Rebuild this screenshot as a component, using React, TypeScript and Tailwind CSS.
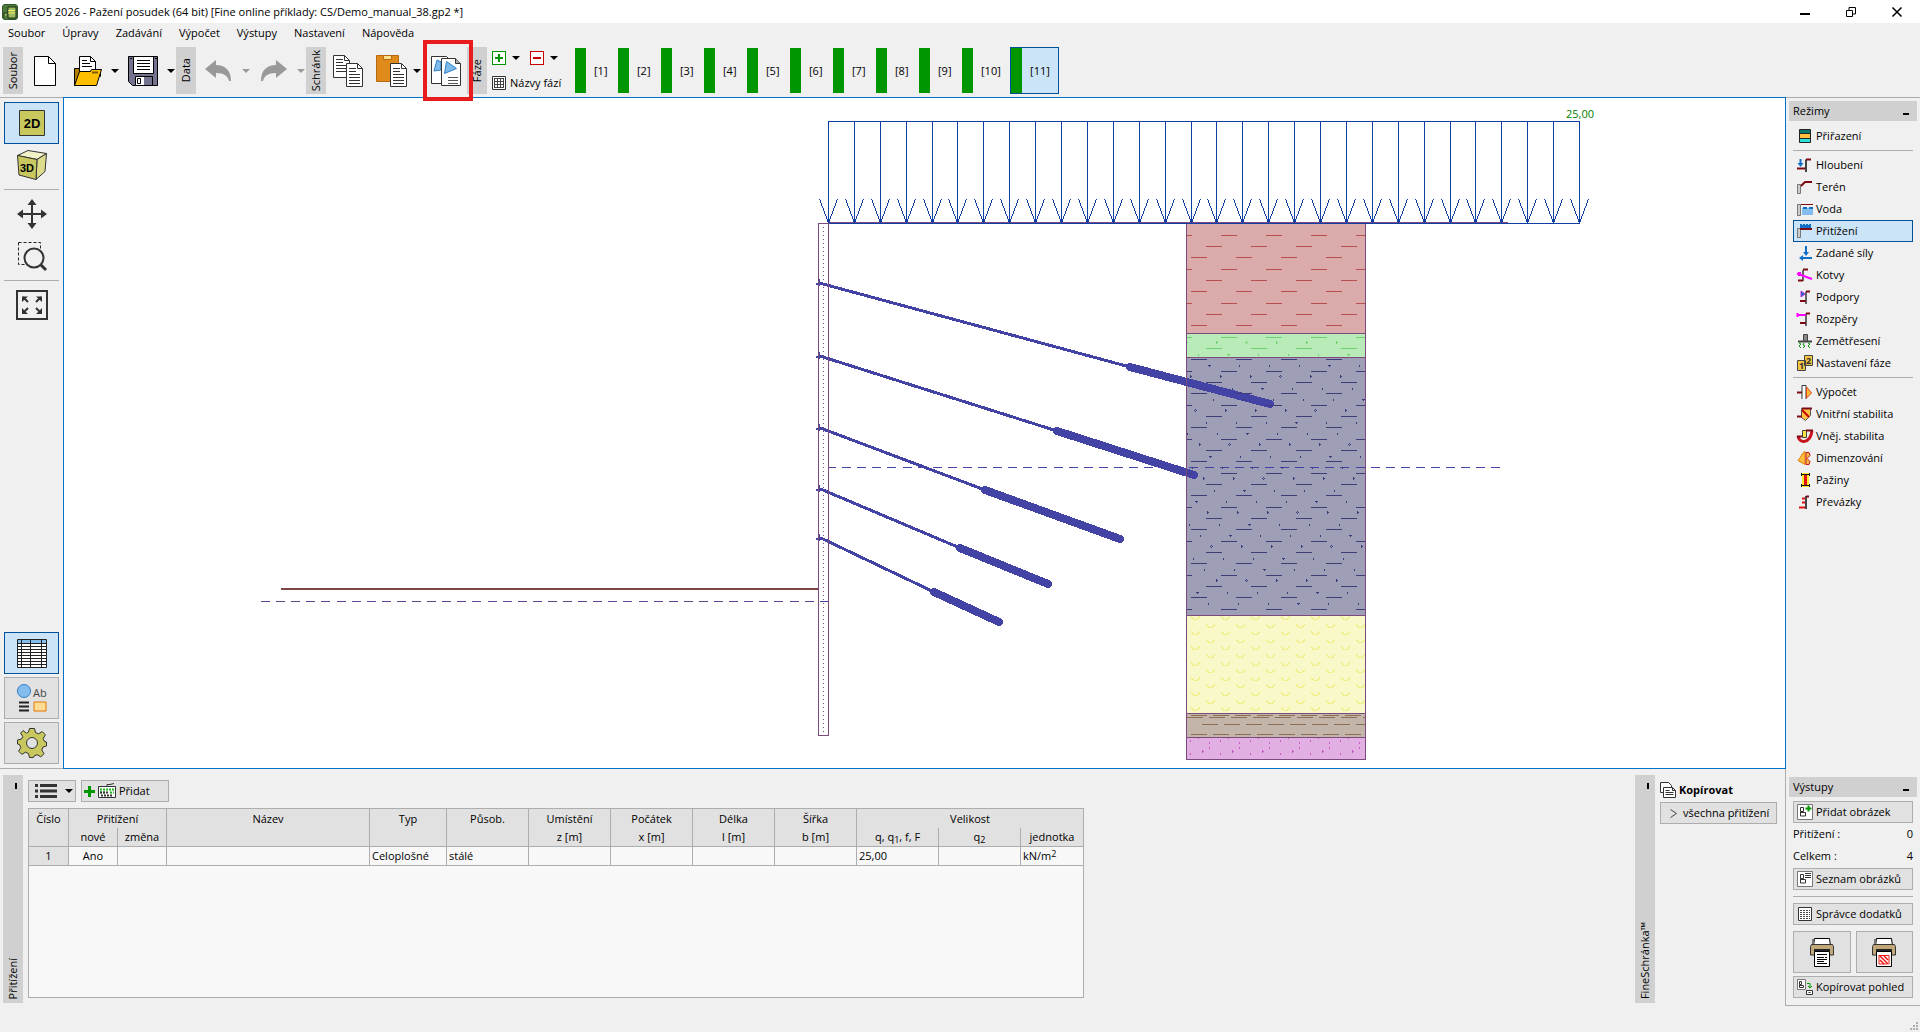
import type { ReactNode } from "react";

const menus = ["Soubor", "Úpravy", "Zadávání", "Výpočet", "Výstupy", "Nastavení", "Nápověda"];
const phases = Array.from({ length: 11 }, (_, i) => i + 1);

function Svg({ w, h, children }: { w: number; h: number; children: ReactNode }) {
  return (
    <svg width={w} height={h} viewBox={`0 0 ${w} ${h}`} fill="none" className="shrink-0 overflow-visible" aria-hidden="true">
      {children}
    </svg>
  );
}

function Caret({ muted = false }: { muted?: boolean }) {
  return (
    <Svg w={8} h={4}>
      <path d="M0 0h8L4 4z" fill={muted ? "#999" : "#000"} />
    </Svg>
  );
}

/* ---------- toolbar ---------- */

function SideTab({ label }: { label: string }) {
  return (
    <div className="flex h-[47px] w-5 shrink-0 items-center justify-center overflow-hidden bg-[#d0d0d0]">
      <span className="rotate-180 whitespace-nowrap [writing-mode:vertical-rl]">{label}</span>
    </div>
  );
}

function ToolButton({ label, width, children }: { label: string; width: string; children: ReactNode }) {
  return (
    <button aria-label={label} className={`flex h-[47px] shrink-0 items-center justify-center ${width}`}>
      {children}
    </button>
  );
}

const pageLines = (x: number, y: number) => (
  <path d={`M${x} ${y}h7M${x} ${y + 3}h7M${x} ${y + 6}h11M${x} ${y + 9}h11M${x} ${y + 12}h11`} stroke="#333" />
);

function NewIcon() {
  return (
    <Svg w={22} h={30}>
      <path d="M.5.5h14l7 7v22H.5z" fill="#fff" stroke="#000" />
      <path d="M14.5.5v7h7" stroke="#000" />
    </Svg>
  );
}

function OpenIcon() {
  return (
    <Svg w={28} h={30}>
      <path d="M.5 29.500v-17h5v5h21v3" fill="#b37d00" stroke="#000" />
      <path d="M5.500.500h11l5 5v15h-16z" fill="#fff" stroke="#000" />
      <path d="M16.500.5v5h5M8 4.500h5M8 7.500h8M8 10.500h10" stroke="#000" />
      <path d="M.5 29.500l5-14h11l1-2h10l-5 16z" fill="#ffbf00" stroke="#000" />
      <path d="M18 16.500h6" stroke="#7a5c10" strokeWidth="2" />
    </Svg>
  );
}

function SaveIcon() {
  return (
    <Svg w={30} h={30}>
      <path d="M.5.500h29v29h-25l-4-4z" fill="#75748f" stroke="#000" />
      <path d="M5.500.500h20v17h-20z" fill="#fff" stroke="#000" />
      <path d="M9 4.500h13M9 7.500h13M9 10.500h13M9 13.500h13M2 2.500h2M27 2.500h2" stroke="#000" />
      <path d="M7.500 20.500h17v9h-17z" fill="#fff" stroke="#000" />
      <path d="M16 21h8v8h-8z" fill="#75748f" />
      <path d="M9.500 22.500h3v5h-3z" stroke="#000" />
    </Svg>
  );
}

function UndoIcon({ flip = false }: { flip?: boolean }) {
  return (
    <Svg w={28} h={22}>
      <path
        d="M0 9L11 0v5c9 0 15 5 15 16h-2c-1-5-5-8-13-8v5z"
        fill="#999"
        transform={flip ? "translate(28 0) scale(-1 1)" : undefined}
      />
    </Svg>
  );
}

function CopyIcon() {
  return (
    <Svg w={30} h={32}>
      <path d="M.5.500h11l5 5v17h-16z" fill="#fff" stroke="#333" />
      <path d="M11.500.500v5h5" stroke="#333" />
      {pageLines(3, 4.5)}
      <path d="M13.500 8.500h11l5 5v18h-16z" fill="#fff" stroke="#333" />
      <path d="M24.500 8.500v5h5" stroke="#333" />
      {pageLines(16, 13.5)}
      <path d="M16 28.500h11" stroke="#333" />
    </Svg>
  );
}

function PasteIcon() {
  return (
    <Svg w={31} h={32}>
      <path d="M.5.500h22v26H.5z" fill="#e08a1c" stroke="#b56a10" />
      <path d="M7.500.500h8v4h-8z" fill="#ffe08a" stroke="#b56a10" />
      <path d="M14.500 8.500h11l5 5v18h-16z" fill="#fff" stroke="#333" />
      <path d="M25.500 8.500v5h5" stroke="#333" />
      {pageLines(17, 13.5)}
      <path d="M17 28.500h11" stroke="#333" />
    </Svg>
  );
}

function PicturesIcon() {
  return (
    <Svg w={30} h={32}>
      <path d="M.5 1.500h15l4 4v23H.5z" fill="#fff" stroke="#333" />
      <path d="M3 16L6 5l4 2v8z" fill="#7cbcec" stroke="#2f7fc4" />
      <path d="M10.500 3.500h14l5 5v22h-19z" fill="#fff" stroke="#333" />
      <path d="M24.500 3.500v5h5" fill="#aaa" stroke="#333" />
      <path d="M13.500 18.500l2-12 10 7z" fill="#7cbcec" stroke="#2f7fc4" />
      <path d="M17 22.500h10M17 25.500h10M17 28.500h10" stroke="#555" />
    </Svg>
  );
}

function TableIcon() {
  return (
    <Svg w={14} h={14}>
      <path d="M.5.500h13v13H.5z" fill="#fff" stroke="#333" />
      <path d="M2 2.500h10M2 5.500h10M2 8.500h10M2 11.500h10M2.500 2v10M5.500 2v10M8.500 2v10M11.500 2v10" stroke="#444" />
    </Svg>
  );
}

function Toolbar() {
  return (
    <div className="flex h-[50px] shrink-0 items-start pl-[3px]">
      <SideTab label="Soubor" />
      <ToolButton label="Nový" width="w-11"><NewIcon /></ToolButton>
      <ToolButton label="Otevřít" width="w-[42px]"><OpenIcon /></ToolButton>
      <ToolButton label="Poslední soubory" width="w-3"><Caret /></ToolButton>
      <ToolButton label="Uložit" width="w-11"><SaveIcon /></ToolButton>
      <ToolButton label="Možnosti uložení" width="w-[11px]"><Caret /></ToolButton>
      <SideTab label="Data" />
      <ToolButton label="Zpět" width="w-[46px]"><UndoIcon /></ToolButton>
      <ToolButton label="Historie zpět" width="w-2"><Caret muted /></ToolButton>
      <ToolButton label="Znovu" width="w-[46px]"><UndoIcon flip /></ToolButton>
      <ToolButton label="Historie znovu" width="w-2.5"><Caret muted /></ToolButton>
      <SideTab label="Schránk" />
      <ToolButton label="Kopírovat" width="w-11"><CopyIcon /></ToolButton>
      <ToolButton label="Vložit" width="w-[42px]"><PasteIcon /></ToolButton>
      <ToolButton label="Možnosti vložení" width="w-2.5"><Caret /></ToolButton>
      <div className="relative">
        <ToolButton label="Obrázky" width="w-[45px] pl-0.5"><PicturesIcon /></ToolButton>
        <div className="pointer-events-none absolute -top-[7px] left-px z-10 h-[61px] w-[50px] border-4 border-[#e81c1c]" />
      </div>
      <SideTab label="Fáze" />

      <div className="flex w-[88px] shrink-0 flex-col pl-[5px] pt-1">
        <div className="flex h-[14px] items-center">
          <button aria-label="Přidat fázi" className="flex h-[14px] w-[14px] items-center justify-center border border-[#009600] bg-white">
            <Svg w={8} h={8}><path d="M4 0v8M0 4h8" stroke="#009600" strokeWidth="2" /></Svg>
          </button>
          <button aria-label="Možnosti přidání" className="ml-[6px] flex w-2"><Caret /></button>
          <button aria-label="Odebrat fázi" className="ml-[10px] flex h-[14px] w-[14px] items-center justify-center border border-[#c80000] bg-white">
            <Svg w={8} h={8}><path d="M0 4h8" stroke="#c80000" strokeWidth="2" /></Svg>
          </button>
          <button aria-label="Možnosti odebrání" className="ml-[6px] flex w-2"><Caret /></button>
        </div>
        <button className="mt-2 flex h-5 items-center gap-1 whitespace-nowrap">
          <TableIcon />
          Názvy fází
        </button>
      </div>

      <div className="flex">
        {phases.map((n) =>
          n === 11 ? (
            <button key={n} aria-pressed="true" className="flex h-[47px] w-[49px] border border-[#00519c] bg-[#cce4f7]">
              <span className="h-full w-[11px] bg-[#009600]" />
              <span className="flex h-full flex-1 items-center justify-center">[{n}]</span>
            </button>
          ) : (
            <button key={n} className={`flex h-[47px] py-px ${n === 10 ? "w-12" : "w-[43px]"}`}>
              <span className="h-full w-[11px] bg-[#009600]" />
              <span className="flex h-full flex-1 items-center pl-2">[{n}]</span>
            </button>
          )
        )}
      </div>
    </div>
  );
}

/* ---------- left view bar ---------- */

function ViewButton({
  label,
  kind = "flat",
  children,
}: {
  label: string;
  kind?: "flat" | "raised" | "active";
  children: ReactNode;
}) {
  const look = {
    flat: "border-transparent",
    raised: "border-[#adadad] bg-[#e1e1e1]",
    active: "border-[#00519c] bg-[#cce4f7]",
  }[kind];
  return (
    <button aria-label={label} className={`flex h-[42px] items-center justify-center border ${look}`}>
      {children}
    </button>
  );
}

function ViewBar() {
  return (
    <div className="flex w-[63px] shrink-0 flex-col border-y border-[#adadad] px-1 py-1">
      <ViewButton label="2D" kind="active">
        <Svg w={26} h={26}>
          <path d="M.5.500h25v25H.5z" fill="#c8c85f" stroke="#333" />
          <text x="13" y="18" fontSize="13" fontWeight="700" textAnchor="middle" fill="#000" fontFamily="Liberation Sans, sans-serif">2D</text>
        </Svg>
      </ViewButton>
      <ViewButton label="3D">
        <Svg w={30} h={30}>
          <path d="M.5 5.500L11 .5l18.500 3-9.500 6z" fill="#f2f2c8" stroke="#333" />
          <path d="M20 9.500l9.500-6-1.500 18-9 8z" fill="#dcdc8c" stroke="#333" />
          <path d="M.5 5.500L20 9.500l-1 20-17-4.500z" fill="#c8c85f" stroke="#333" />
          <text x="10" y="22" fontSize="11" fontWeight="700" textAnchor="middle" fill="#000" fontFamily="Liberation Sans, sans-serif">3D</text>
        </Svg>
      </ViewButton>
      <div className="my-[3px] h-px bg-[#adadad]" />
      <ViewButton label="Posun">
        <Svg w={30} h={30}>
          <path d="M15 4v22M4 15h22" stroke="#333" strokeWidth="2" />
          <path d="M15 0l4.500 6h-9zM15 30l4.500-6h-9zM0 15l6-4.500v9zM30 15l-6-4.500v9z" fill="#333" />
        </Svg>
      </ViewButton>
      <ViewButton label="Lupa">
        <Svg w={30} h={30}>
          <path d="M1.500 1.500h22v22h-22z" stroke="#222" strokeDasharray="3 2" />
          <circle cx="17" cy="17" r="9.500" fill="#f0f0f0" stroke="#333" strokeWidth="2" />
          <path d="M24 24l5 5" stroke="#333" strokeWidth="3" />
        </Svg>
      </ViewButton>
      <div className="my-[3px] h-px bg-[#adadad]" />
      <ViewButton label="Zobrazit vše">
        <Svg w={32} h={30}>
          <path d="M1 1h30v28H1z" stroke="#333" strokeWidth="2" />
          <path d="M6 12V6.500h6zM20 6.500h6V12zM6 18v6h6zM26 18v6h-6z" fill="#333" />
          <path d="M7 7l5 5M25 7l-5 5M7 23l5-5M25 23l-5-5" stroke="#333" strokeWidth="2" />
        </Svg>
      </ViewButton>
      <div className="flex-1" />
      <div className="flex flex-col gap-[3px]">
        <ViewButton label="Tabulka" kind="active">
          <Svg w={30} h={29}>
            <path d="M.5.500h29v28H.5z" fill="#fff" stroke="#222" />
            <path d="M1 1h28v3H1z" fill="#82bdee" />
            <path d="M1 4.500h28M1 7.500h28M1 10.500h28M1 13.500h28M1 16.500h28M1 19.500h28M1 22.500h28M1 25.500h28M4.500 1v27M13.500 1v27M24.500 1v27" stroke="#222" />
          </Svg>
        </ViewButton>
        <ViewButton label="Popisky" kind="raised">
          <Svg w={30} h={28}>
            <circle cx="7" cy="7" r="6.500" fill="#82bdee" stroke="#2f7fc4" />
            <text x="16" y="13" fontSize="11" fill="#444" fontFamily="Open Sans, sans-serif">Ab</text>
            <path d="M2 18.500h10M2 22.500h10M2 26.500h10" stroke="#222" strokeWidth="2" />
            <path d="M17 18h12v9H17z" fill="#fddc96" stroke="#e07800" />
          </Svg>
        </ViewButton>
        <ViewButton label="Nastavení" kind="raised">
          <Svg w={30} h={30}>
            <path
              d="M12.500.500h5l1 4 3 1.300 3.700-2.200 3.200 3.200-2.200 3.700 1.300 3 2 .5v4l-3.500 1-1.200 3 2.200 3.700-3.200 3.200-3.700-2.200-3 1.300-.6 1.500h-4l-1-4-3-1.300-3.700 2.200-3.200-3.200 2.200-3.700-1.300-3L.5 16v-4l4-1 1.300-2.500L3.600 5 6 2.600l3.500 2.600L11.500 4z"
              fill="#c8c85f"
              stroke="#333"
            />
            <circle cx="15" cy="15" r="5.500" fill="#e1e1e1" stroke="#333" />
          </Svg>
        </ViewButton>
      </div>
    </div>
  );
}

/* ---------- model drawing ---------- */

const COL_L = 1186;
const COL_R = 1366;

const layers = [
  { y: 223, h: 110, fill: "#dbabab" },
  { y: 333, h: 24, fill: "#b8ebb8" },
  { y: 357, h: 258, fill: "#9e9eb6" },
  { y: 615, h: 98, fill: "#f9f8c8" },
  { y: 713, h: 24, fill: "#c3b5a9" },
  { y: 737, h: 22, fill: "#e1afe1" },
];

// head, start of the root, end of the root
const anchors = [
  [283, 1130, 367, 1270, 404],
  [356, 1057, 431, 1194, 475],
  [428, 985, 490, 1120, 539],
  [489, 960, 548, 1048, 584],
  [538, 934, 592, 999, 622],
];

// clay dashes: three staggered rows repeated every 34 px
function clayPath(top: number, bottom: number) {
  let d = "";
  for (let k = 0; k < 12; k++) {
    [0, 11, 22].forEach((dy, i) => {
      const y = 235 + 34 * k + dy;
      if (y <= top || y >= bottom) return;
      for (let x = 1176 - 15 * i; x < COL_R; x += 45) {
        const a = Math.max(x, COL_L);
        const b = Math.min(x + 16, COL_R);
        if (b > a) d += `M${a} ${y + 0.5}h${b - a}`;
      }
    });
  }
  return d;
}

// sandy marks on a diagonal lattice
function grainPath(top: number, bottom: number) {
  let d = "";
  for (let r = -2; r < 22; r++) {
    const y = Math.round(365 + 11.33 * r);
    if (y < top + 2 || y > bottom - 2) continue;
    const shift = (((23 + 11.4 * r) % 30) + 30) % 30;
    for (let i = 0; i < 6; i++) {
      const x = Math.round(COL_L + shift + 30 * i);
      if (x > COL_R - 3) continue;
      if (((r % 3) + 3) % 3 !== 1) d += (i + r) % 4 === 0 ? `M${x - 1} ${y}h3v1h-3zM${x} ${y + 1}h1v1h-1z` : `M${x} ${y}h1v2h-1z`;
      else if ((i + r) % 4 === 0) d += `M${x} ${y - 1}h1v1h-1zM${x - 1} ${y}h1v1h-1zM${x + 1} ${y}h1v1h-1zM${x} ${y + 1}h1v1h-1z`;
      else d += `M${x} ${y - 1}h1v3h-1zM${x + 1} ${y}h1v1h-1z`;
    }
  }
  return d;
}

function wavePath() {
  let d = "";
  for (let r = 0; r < 13; r++) {
    const y = Math.round(616 + 7.6 * r);
    for (let x = 1191 + (r % 2) * 15; x < COL_R - 6; x += 30) d += `M${x}.5 ${y}v1l2 2h4l2-2v-1`;
  }
  return d;
}

function siltPath() {
  let d = "";
  [
    [715, 1191],
    [717, 1187],
    [724, 1202],
    [734, 1191],
  ].forEach(([y, x0]) => {
    for (let x = x0; x < COL_R; x += 22) d += `M${x} ${y}.5h${Math.min(16, COL_R - x)}`;
  });
  return d;
}

function gravelPath() {
  let d = "";
  for (let i = 0; i < 6; i++) {
    const x = 1190 + 30 * i;
    d += `M${x} 740h1v2h-1zM${x} 753h1v2h-1zM${x + 8} 738h1v1h-1z`;
    if (x + 19 < COL_R) d += `M${x + 19} 742h1v2h-1zM${x + 19} 747h1v2h-1z`;
    d += `M${x + 12} 750h1v3h-1zM${x + 13} 751h1v1h-1z`;
  }
  return d;
}

function ModelDrawing() {
  const loads = Array.from({ length: 30 }, (_, i) => Math.round(828 + (751 / 29) * i));
  return (
    <svg viewBox="64 98 1721 670" className="block h-full w-full" role="img" aria-label="Model konstrukce" fill="none">
      <g shapeRendering="crispEdges">
        {layers.map((l) => (
          <rect key={l.y} x={COL_L} y={l.y} width={COL_R - COL_L} height={l.h} fill={l.fill} />
        ))}
        <path d="M828 222.500H1508" stroke="#7d4a7d" />
        <path d="M828 223.500H1580M828 121.500H1580" stroke="#0f3fa5" />
        <path d={loads.map((x) => `M${x}.5 121v102`).join("")} stroke="#0f3fa5" />
        <path d={loads.map((x) => `M${x - 9}.5 199l9 24l9-24`).join("")} stroke="#0f3fa5" />
        <path d="M828 467.500H1502" stroke="#4343a5" strokeDasharray="9 6.1" strokeDashoffset="1" />
        <path d="M261 601.500H828" stroke="#4343a5" strokeDasharray="9 6.1" />
        <path d="M261 601.500H818" stroke="#7d4a7d" strokeOpacity="0.500" strokeDasharray="9 6.1" />
        <path d="M281 589H818" stroke="#7d4545" strokeWidth="2" />
      </g>

      {anchors.map(([y, rx, ry, ex, ey]) => (
        <g key={y} stroke="#4343a5" shapeRendering="crispEdges">
          <path d={`M818 ${y}l5 1L${rx} ${ry}`} strokeWidth="3" />
          <path d={`M819 ${y - 4}v7M816 ${y + 1}h4`} strokeWidth="2" />
          <path d={`M${rx} ${ry}L${ex} ${ey}`} strokeWidth="8" strokeLinecap="round" />
        </g>
      ))}

      <g shapeRendering="crispEdges">
        <path d={clayPath(223, 333)} stroke="#b84f4f" />
        <path d={clayPath(333, 357)} stroke="#6fd06f" />
        <path d={grainPath(333, 357)} fill="#6fd06f" />
        <path d={clayPath(357, 615)} stroke="#3d3d78" />
        <path d={grainPath(357, 615)} fill="#3d3d78" />
        <path d={wavePath()} stroke="#f0ef85" />
        <path d={siltPath()} stroke="#8c6f55" />
        <path d={gravelPath()} fill="#c45ac4" />
        {layers.map((l) => (
          <rect key={l.y} x={COL_L + 0.5} y={l.y + 0.5} width={COL_R - COL_L - 1} height={l.h} stroke="#7d4a7d" />
        ))}
        <path d="M818.500 223.500h10v512h-10z" stroke="#7d4a7d" />
        <path d="M823.500 227v508" stroke="#7d4a7d" strokeDasharray="1 3" />
        <path d="M1186 223.500H1366" stroke="#0f3fa5" />
      </g>
      <text x="1566" y="118" fontSize="11" fill="#008000">25,00</text>
    </svg>
  );
}

/* ---------- mode list icons ---------- */

const RED = "#7d0a14";

const icons: Record<string, ReactNode> = {
  assign: (
    <>
      <path d="M2.500 1.500h11v13h-11z" fill="#ffc040" stroke="#222" />
      <path d="M3 2h10v3.500H3z" fill="#08786c" />
      <path d="M3 10.500h10V14H3z" fill="#28e0d8" />
      <path d="M3 5.500h10M3 10.500h10" stroke="#222" />
    </>
  ),
  dig: (
    <>
      <path d="M3.500 2v5" stroke="#0f6fc8" strokeWidth="2" />
      <path d="M.5 6h6l-3 4z" fill="#0f6fc8" />
      <path d="M0 11.500h8" stroke={RED} strokeWidth="2" />
      <path d="M9 15V2.500" stroke="#444" strokeWidth="2" />
      <path d="M9 2.500h5" stroke={RED} strokeWidth="2" />
    </>
  ),
  terrain: (
    <>
      <path d="M.5 5.500h3v9h-3z" fill="#ccc" stroke="#777" />
      <path d="M4 7l4-4h7" stroke={RED} strokeWidth="2" />
    </>
  ),
  water: (
    <>
      <path d="M.5 3.500h3v11h-3z" fill="#ccc" stroke="#777" />
      <path d="M4 3.500h12" stroke={RED} />
      <path d="M5 7h11v7H5z" fill="#82bdee" />
      <path d="M6 7h4M12 7h4" stroke="#0f6fc8" strokeWidth="2" />
    </>
  ),
  surcharge: (
    <>
      <path d="M.5 5.500h3v9h-3z" fill="#ccc" stroke="#777" />
      <path d="M3 1h2v1h1V1h2v1h1V1h2v1h1V1h2v4H3z" fill="#0f6fc8" />
      <path d="M3 6h12" stroke={RED} strokeWidth="2" />
    </>
  ),
  forces: (
    <>
      <path d="M9 1v7M6 13h9" stroke="#0f6fc8" strokeWidth="2" />
      <path d="M6 7h6l-3 4zM2 13l4-3v6z" fill="#0f6fc8" />
    </>
  ),
  anchor: (
    <>
      <path d="M6 14V3" stroke="#666" strokeWidth="2" />
      <path d="M6 2.500h5M1 13.500h5" stroke={RED} strokeWidth="2" />
      <path d="M0 6.500L15 12" stroke="#f0f" strokeWidth="2" />
      <path d="M1 5h3v4H1z" fill="#f0f" />
    </>
  ),
  support: (
    <>
      <path d="M9 15V2.500" stroke="#666" strokeWidth="2" />
      <path d="M9 2.500h4M3 12h6" stroke={RED} strokeWidth="2" />
      <path d="M4 2l4 3-4 3z" fill="#0f6fc8" stroke="#b428d8" />
    </>
  ),
  strut: (
    <>
      <path d="M9 15V2.500" stroke="#666" strokeWidth="2" />
      <path d="M9 2.500h4M3 12h6" stroke={RED} strokeWidth="2" />
      <path d="M0 4h9M.5 2v4" stroke="#f0f" strokeWidth="2" />
    </>
  ),
  quake: (
    <>
      <path d="M6.500 1.500h4v7h-4z" fill="#888" stroke="#444" />
      <path d="M1 8.500h14" stroke="#444" strokeWidth="2" />
      <path d="M2 10l2 1-2 2 2 2M7 10l-1 2 2 1-2 2M11 10l2 1-2 2 2 2" stroke="#0a960a" />
    </>
  ),
  phase: (
    <>
      <path d="M.5 5.500h8v10h-8zM7.500.500h8v10h-8z" fill="#f5c542" stroke="#444" />
      <text x="2" y="14" fontSize="9" fontWeight="700" fill="#333">1</text>
      <text x="9" y="9" fontSize="9" fontWeight="700" fill="#333">2</text>
    </>
  ),
  calc: (
    <>
      <path d="M0 8.500h5" stroke={RED} strokeWidth="2" />
      <path d="M5 15V1.500h4V15" fill="#fff" stroke="#333" />
      <path d="M9.500 3l5 6-5 5z" fill="#ffc040" stroke="#e04010" />
    </>
  ),
  inner: (
    <>
      <path d="M4.500 2.500h9v7l-5 5-4-3z" fill="#ffc040" stroke="#555" />
      <path d="M5 4l7 7" stroke="#c80000" strokeWidth="2" />
      <path d="M0 10.500h5M5 2.500h10" stroke={RED} strokeWidth="2" />
    </>
  ),
  outer: (
    <>
      <path d="M1 8c1 8 12 8 14-5" stroke="#c8141e" strokeWidth="3" />
      <path d="M5.500 2.500h4v7h-4z" fill="#ffe040" stroke="#444" />
      <path d="M0 8.500h5M9 2.500h7" stroke={RED} strokeWidth="2" />
    </>
  ),
  design: (
    <>
      <path d="M8 1.500c-4 2-3 5-7 9l7 4z" fill="#ffc040" stroke="#e07800" />
      <path d="M9 2.500h3l1 3-3 3 3 3-1 3H9z" fill="#ffc040" stroke="#c8141e" />
    </>
  ),
  lagging: (
    <>
      <path d="M5 1h7v14H5z" fill="#ffe828" />
      <path d="M8.500 2v12" stroke="#e01010" strokeWidth="3" />
      <path d="M4 2.500h9M4 13.500h9M4.500 1v3M12.500 1v3M4.500 12v3M12.500 12v3" stroke="#111" />
    </>
  ),
  waler: (
    <>
      <path d="M9 15V2" stroke="#444" strokeWidth="2" />
      <path d="M9 2.500h3" stroke={RED} strokeWidth="2" />
      <path d="M5 4.500h3M5 8.500h3M2 13.500h6" stroke="#e01010" strokeWidth="2" />
    </>
  ),
};

const modeGroups = [
  [["Přiřazení", "assign"]],
  [
    ["Hloubení", "dig"],
    ["Terén", "terrain"],
    ["Voda", "water"],
    ["Přitížení", "surcharge"],
    ["Zadané síly", "forces"],
    ["Kotvy", "anchor"],
    ["Podpory", "support"],
    ["Rozpěry", "strut"],
    ["Zemětřesení", "quake"],
    ["Nastavení fáze", "phase"],
  ],
  [
    ["Výpočet", "calc"],
    ["Vnitřní stabilita", "inner"],
    ["Vněj. stabilita", "outer"],
    ["Dimenzování", "design"],
    ["Pažiny", "lagging"],
    ["Převázky", "waler"],
  ],
];

function PanelHeader({ title }: { title: string }) {
  return (
    <div className="mx-[3px] flex h-5 items-center justify-between bg-[#d0d0d0] px-1">
      <h2>{title}</h2>
      <button aria-label={`Sbalit ${title}`} className="flex h-full items-end px-1 pb-[6px]">
        <span className="h-0.5 w-1.5 bg-black" />
      </button>
    </div>
  );
}

function ModeList() {
  return (
    <nav className="px-[7px] pt-1">
      {modeGroups.map((group, g) => (
        <div key={g}>
          {g > 0 && <div className="my-[3px] h-px bg-[#adadad]" />}
          {group.map(([label, icon]) => (
            <button
              key={label}
              className={`flex h-[22px] w-full items-center gap-[3px] whitespace-nowrap border pl-[3px] ${
                label === "Přitížení" ? "border-[#00519c] bg-[#cce4f7]" : "border-transparent"
              }`}
            >
              <Svg w={16} h={16}>{icons[icon]}</Svg>
              {label}
            </button>
          ))}
        </div>
      ))}
    </nav>
  );
}

/* ---------- outputs ---------- */

const drawingMark = <path d="M3.500 3.500h3v4h-3zM3.500 7.500v4.500h5V8.500h-5" stroke="#333" />;

function OutButton({ label, children }: { label: string; children: ReactNode }) {
  return (
    <button className="flex h-[22px] w-full shrink-0 items-center gap-[3px] whitespace-nowrap border border-[#adadad] bg-[#e1e1e1] pl-[3px]">
      {children}
      {label}
    </button>
  );
}

function Printer({ pdf = false }: { pdf?: boolean }) {
  return (
    <Svg w={24} h={30}>
      <path d="M3.500 9l1-7.500h15l1 7.500" fill="#fff" stroke="#000" />
      <path d="M3 2v6" stroke="#777" strokeWidth="2" />
      <path d="M1.500 7.500h21l1 2v8.500H.5V9.500z" fill="#c0a878" stroke="#333" />
      <path d="M4 12h16v2H4z" fill="#222" />
      <path d="M4.500 14.500h15v15h-15z" fill="#fff" stroke="#000" />
      {pdf ? (
        <>
          <path d="M7 18.500h10v9M7 18v9h8" stroke="#f01414" />
          <path d="M8 19l8 8M12 19l4 4M8 23l4 4" stroke="#f01414" strokeWidth="1.500" />
        </>
      ) : (
        <path d="M7 17.500h10M7 20.500h7M15 20.500h2M7 22.500h10M7 24.500h7M7 26.500h10" stroke="#000" />
      )}
    </Svg>
  );
}

function Outputs() {
  return (
    <section className="border-b border-[#adadad] pb-[7px]">
      <PanelHeader title="Výstupy" />
      <div className="flex flex-col px-[7px] pt-1">
        <OutButton label="Přidat obrázek">
          <Svg w={16} h={16}>
            <path d="M.5.500h15v15H.5z" fill="#fff" stroke="#777" />
            {drawingMark}
            <path d="M11.500 1.500v6M8.500 4.500h6" stroke="#009600" strokeWidth="2" />
          </Svg>
        </OutButton>
        <div className="flex h-[22px] items-center justify-between"><span>Přitížení :</span><span>0</span></div>
        <div className="mb-[2px] flex h-[21px] items-center justify-between"><span>Celkem :</span><span>4</span></div>
        <OutButton label="Seznam obrázků">
          <Svg w={16} h={16}>
            <path d="M.5.500h15v15H.5z" fill="#fff" stroke="#777" />
            {drawingMark}
            <path d="M8 2.500h6M8 4.500h6M8 6.500h6" stroke="#333" />
          </Svg>
        </OutButton>
        <div className="my-[6px] h-px shrink-0 bg-[#adadad]" />
        <OutButton label="Správce dodatků">
          <Svg w={16} h={16}>
            <path d="M1.500 1.500h13v13h-13z" fill="#fff" stroke="#333" />
            <path d="M3 4.500h10M3 6.500h10M3 8.500h10M3 10.500h10M3 12.500h10" stroke="#444" strokeDasharray="2 1" />
          </Svg>
        </OutButton>
        <div className="mb-[3px] mt-[6px] grid grid-cols-2 gap-[5px]">
          <button aria-label="Tisk" className="flex h-[42px] items-center justify-center border border-[#adadad] bg-[#e1e1e1]"><Printer /></button>
          <button aria-label="Tisk do PDF" className="flex h-[42px] items-center justify-center border border-[#adadad] bg-[#e1e1e1]"><Printer pdf /></button>
        </div>
        <OutButton label="Kopírovat pohled">
          <Svg w={16} h={16}>
            <path d="M.5.500h8v10h-8z" fill="#fff" stroke="#777" />
            <path d="M2.500 2.500h2v3h-2zM2.500 5.500v3h4v-2h-4" stroke="#333" />
            <path d="M10 4.500h3v4M11 7l2 2 2-2" stroke="#009600" />
            <path d="M9.500 11.500h6v4h-6zM11.500 13.500h2" fill="#fff" stroke="#333" />
          </Svg>
        </OutButton>
      </div>
    </section>
  );
}

/* ---------- bottom panel ---------- */

function DockTab({ label }: { label: string }) {
  return (
    <div className="flex w-5 shrink-0 flex-col items-center justify-between bg-[#d0d0d0] pb-1 pt-2">
      <button aria-label={`Sbalit ${label}`} className="flex w-full justify-end pr-1.5">
        <span className="h-1.5 w-0.5 bg-black" />
      </button>
      <span className="rotate-180 whitespace-nowrap [text-orientation:sideways] [writing-mode:vertical-rl]">{label}</span>
    </div>
  );
}

const colWidths = ["w-[40px]", "w-[49px]", "w-[49px]", "w-[203px]", "w-[77px]", "w-[82px]", "w-[82px]", "w-[82px]", "w-[82px]", "w-[82px]", "w-[82px]", "w-[82px]", "w-[62px]"];
const row = ["1", "Ano", "", "", "Celoplošné", "stálé", "", "", "", "", "25,00", "", ""];

function LoadTable() {
  const top = "h-[19px] border-r border-[#adadad] p-0 font-normal";
  const sub = "h-[19px] border-r border-b border-[#adadad] p-0 font-normal";
  return (
    <div className="min-h-0 w-[1056px] flex-1 border border-[#adadad] bg-[#f8f8f8]">
      <table className="w-full table-fixed border-separate border-spacing-0 leading-[18px]">
        <colgroup>
          {colWidths.map((w, i) => (
            <col key={i} className={w} />
          ))}
        </colgroup>
        <thead className="bg-[#e1e1e1]">
          <tr>
            <th className={top}>Číslo</th>
            <th className={top} colSpan={2}>Přitížení</th>
            <th className={top}>Název</th>
            <th className={top}>Typ</th>
            <th className={top}>Působ.</th>
            <th className={top}>Umístění</th>
            <th className={top}>Počátek</th>
            <th className={top}>Délka</th>
            <th className={top}>Šířka</th>
            <th className="h-[19px] p-0 font-normal" colSpan={3}>Velikost</th>
          </tr>
          <tr>
            <th className={sub} />
            <th className={sub}>nové</th>
            <th className={sub}>změna</th>
            <th className={sub} />
            <th className={sub} />
            <th className={sub} />
            <th className={sub}>z [m]</th>
            <th className={sub}>x [m]</th>
            <th className={sub}>l [m]</th>
            <th className={sub}>b [m]</th>
            <th className={sub}>q, q<sub className="text-[9px] leading-none">1</sub>, f, F</th>
            <th className={sub}>q<sub className="text-[9px] leading-none">2</sub></th>
            <th className="h-[19px] border-b border-[#adadad] p-0 font-normal">jednotka</th>
          </tr>
        </thead>
        <tbody>
          <tr>
            {row.map((cell, i) => (
              <td
                key={i}
                className={`h-[19px] border-b border-[#adadad] p-0 ${i < 12 ? "border-r" : ""} ${
                  i === 0 ? "bg-[#e1e1e1]" : ""
                } ${i < 2 ? "text-center" : "pl-0.5"}`}
              >
                {i === 12 ? <>kN/m<sup className="text-[9px] leading-none -top-[3px]">2</sup></> : cell}
              </td>
            ))}
          </tr>
        </tbody>
      </table>
    </div>
  );
}

function BottomPanel() {
  return (
    <div className="flex h-[237px] shrink-0 border-r border-[#adadad] pb-[3px] pl-[3px] pr-2 pt-[6px]">
      <DockTab label="Přitížení" />
      <div className="flex flex-1 flex-col gap-[6px] pb-[5px] pl-[5px] pt-[5px]">
        <div className="flex gap-[5px]">
          <button aria-label="Seznam" className="flex h-[22px] w-12 items-center justify-end gap-2 border border-[#adadad] bg-[#e1e1e1] pr-0.5">
            <Svg w={22} h={14}>
              <path d="M0 1.500h3M0 7h3M0 12.500h3M5 1.500h17M5 7h17M5 12.500h17" stroke="#333" strokeWidth="3" />
            </Svg>
            <Caret />
          </button>
          <button className="flex h-[22px] w-[88px] items-center gap-[3px] border border-[#adadad] bg-[#e1e1e1] pl-0.5">
            <Svg w={11} h={11}><path d="M5.500 0v11M0 5.500h11" stroke="#009600" strokeWidth="3" /></Svg>
            <Svg w={18} h={16}>
              <path d="M9 3V1.500h3l4-1" stroke="#333" />
              <path d="M.5 3.500h17v11H.5z" fill="#fff" stroke="#333" />
              <path d="M2 6.500h14M2 9.500h5M12 9.500h4" stroke="#14b414" strokeWidth="2" strokeDasharray="2 1" />
              <path d="M2 9.500h9M3 12.500h11" stroke="#333" strokeWidth="2" strokeDasharray="2 1" />
            </Svg>
            Přidat
          </button>
        </div>
        <LoadTable />
      </div>
      <DockTab label="FineSchránka™" />
      <div className="w-[122px] shrink-0 pl-[5px] pt-[5px]">
        <div className="mb-0.5 flex h-5 items-center gap-[3px] font-bold">
          <Svg w={16} h={16}>
            <path d="M.5.500h8l3 3v7H.5z" fill="#fff" stroke="#333" />
            <path d="M3.500 5.500h9l3 3v7h-12z" fill="#fff" stroke="#333" />
            <path d="M12.500 5.500v3h3M5.500 8.500h4M5.500 10.500h8M5.500 12.500h8" stroke="#333" />
          </Svg>
          Kopírovat
        </div>
        <button className="flex h-[22px] w-full items-center gap-[6px] whitespace-nowrap border border-[#adadad] bg-[#e1e1e1] pl-[9px]">
          <Svg w={7} h={9}><path d="M.5.500l6 4-6 4" stroke="#444" /></Svg>
          všechna přitížení
        </button>
      </div>
    </div>
  );
}

export default function App() {
  return (
    <div className="flex h-screen flex-col overflow-hidden bg-[#f0f0f0] font-['Open_Sans','Noto_Sans',sans-serif] text-[11px] leading-4 text-black">
      <header className="flex h-[23px] shrink-0 items-center bg-white pl-0.5">
        <Svg w={16} h={16}>
          <rect x="0.5" y="0.500" width="15" height="15" rx="2.500" fill="#4d7a3c" stroke="#33552a" />
          <path d="M2 14V9h4V3h8v11H6V9" fill="#9dbb60" stroke="#1c2e14" />
          <path d="M6 6.500h7M6 9h7" stroke="#f0e860" />
        </Svg>
        <h1 className="ml-[5px] flex-1">GEO5 2026 - Pažení posudek (64 bit) [Fine online příklady: CS/Demo_manual_38.gp2 *]</h1>
        <button aria-label="Minimalizovat" className="flex h-full w-[46px] items-center justify-center">
          <Svg w={10} h={10}><path d="M0 7h10" stroke="#000" strokeWidth="2" /></Svg>
        </button>
        <button aria-label="Obnovit" className="flex h-full w-[46px] items-center justify-center">
          <Svg w={10} h={10}><path d="M.5 3.500h6v6h-6zM3 3V.500h6.500V7H7" stroke="#000" /></Svg>
        </button>
        <button aria-label="Zavřít" className="flex h-full w-[46px] items-center justify-center">
          <Svg w={10} h={10}><path d="M.5.500l9 9M9.500.500l-9 9" stroke="#000" strokeWidth="1.500" /></Svg>
        </button>
      </header>

      <nav className="flex h-6 shrink-0 items-start gap-[17px] pl-2 pt-0.5">
        {menus.map((m) => (
          <button key={m}>{m}</button>
        ))}
      </nav>

      <Toolbar />

      <div className="flex min-h-0 flex-1">
        <main className="flex min-w-0 flex-1 flex-col">
          <div className="flex min-h-0 flex-1">
            <ViewBar />
            <div className="min-w-0 flex-1 border border-[#0073c8] bg-white">
              <ModelDrawing />
            </div>
          </div>
          <BottomPanel />
        </main>
        <aside className="flex w-[134px] shrink-0 flex-col border-t border-[#adadad] pt-[3px]">
          <PanelHeader title="Režimy" />
          <ModeList />
          <div className="flex-1" />
          <Outputs />
        </aside>
      </div>

      <footer className="flex h-[26px] shrink-0 items-end justify-end p-0.5">
        <Svg w={8} h={8}>
          <path d="M6 0h2v2H6zM3 3h2v2H3zM6 3h2v2H6zM0 6h2v2H0zM3 6h2v2H3zM6 6h2v2H6z" fill="#adadad" />
        </Svg>
      </footer>
    </div>
  );
}
